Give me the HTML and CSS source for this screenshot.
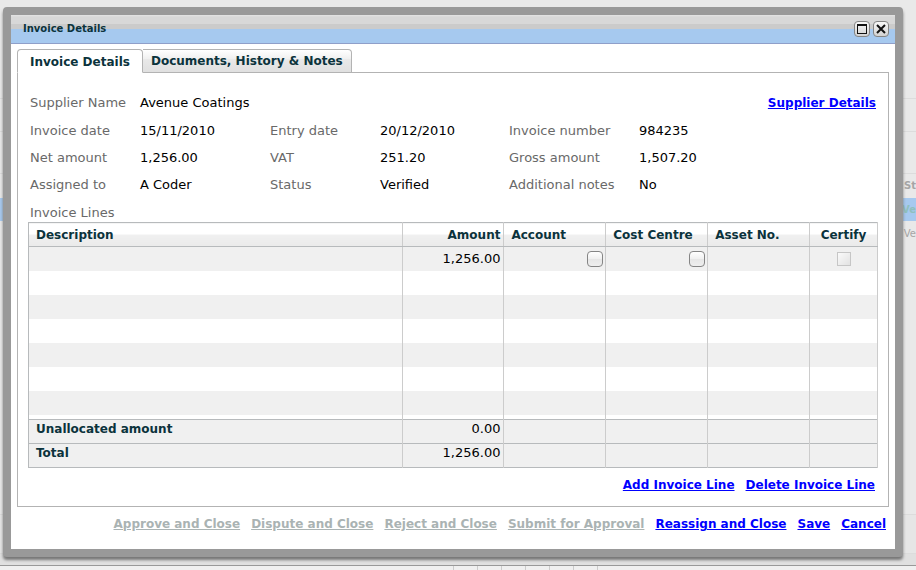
FILE: index.html
```html
<!DOCTYPE html>
<html lang="en">
<head>
<meta charset="utf-8">
<title>Invoice Details</title>
<link rel="stylesheet" href="styles.css">
</head>
<body>
<div class="backdrop" aria-hidden="true">
  <div class="band band-top"></div>
  <div class="band band-tools"></div>
  <div class="band band-filter"></div>
  <div class="band band-head">St</div>
  <div class="band band-selected">Ve</div>
  <div class="band band-row">Ve</div>
  <div class="band band-rest"></div>
  <div class="band band-foot"></div>
  <div class="band band-edge"></div>
  <div class="statusbar"><i></i><i></i><i></i><i></i><i></i><i></i><i></i></div>
</div>
<main class="dialog" role="dialog" aria-labelledby="dialog-title">
  <header class="titlebar">
    <h1 id="dialog-title">Invoice Details</h1>
    <button type="button" class="window-button" aria-label="Maximize"><svg viewBox="0 0 14 14"><path d="M2 2h10v10H2z M3 4v7h8V4z" fill="#111" fill-rule="evenodd"/></svg></button>
    <button type="button" class="window-button" aria-label="Close"><svg viewBox="0 0 14 14"><path d="M3 3l8 8M11 3l-8 8" stroke="#111" stroke-width="2"/></svg></button>
  </header>
  <div class="body">
    <div class="tabs" role="tablist">
      <button type="button" class="tab active" role="tab" aria-selected="true">Invoice Details</button>
      <button type="button" class="tab" role="tab" aria-selected="false">Documents, History &amp; Notes</button>
    </div>
    <section class="panel" role="tabpanel">
      <div class="supplier">
        <span class="label">Supplier Name</span><span>Avenue Coatings</span>
        <a class="link" href="#">Supplier Details</a>
      </div>
      <div class="fields">
        <span class="label">Invoice date</span><span>15/11/2010</span>
        <span class="label">Entry date</span><span>20/12/2010</span>
        <span class="label">Invoice number</span><span>984235</span>
        <span class="label">Net amount</span><span>1,256.00</span>
        <span class="label">VAT</span><span>251.20</span>
        <span class="label">Gross amount</span><span>1,507.20</span>
        <span class="label">Assigned to</span><span>A Coder</span>
        <span class="label">Status</span><span>Verified</span>
        <span class="label">Additional notes</span><span>No</span>
      </div>
      <h2 class="label lines-title" id="lines-title">Invoice Lines</h2>
      <table class="lines" aria-labelledby="lines-title">
        <colgroup><col class="c-desc"><col class="c-amount"><col class="c-account"><col class="c-centre"><col class="c-asset"><col class="c-certify"></colgroup>
        <thead>
          <tr><th>Description</th><th class="num">Amount</th><th>Account</th><th>Cost Centre</th><th>Asset No.</th><th class="mid">Certify</th></tr>
        </thead>
        <tbody>
          <tr><td></td><td class="num">1,256.00</td><td class="pick"><button type="button" class="picker" aria-label="Choose account"></button></td><td class="pick"><button type="button" class="picker" aria-label="Choose cost centre"></button></td><td></td><td class="mid"><input type="checkbox" class="certify" aria-label="Certify" disabled></td></tr>
          <tr><td></td><td></td><td></td><td></td><td></td><td></td></tr>
          <tr><td></td><td></td><td></td><td></td><td></td><td></td></tr>
          <tr><td></td><td></td><td></td><td></td><td></td><td></td></tr>
          <tr><td></td><td></td><td></td><td></td><td></td><td></td></tr>
          <tr><td></td><td></td><td></td><td></td><td></td><td></td></tr>
          <tr><td></td><td></td><td></td><td></td><td></td><td></td></tr>
          <tr class="spacer"><td></td><td></td><td></td><td></td><td></td><td></td></tr>
        </tbody>
        <tfoot>
          <tr><th>Unallocated amount</th><td class="num">0.00</td><td></td><td></td><td></td><td></td></tr>
          <tr><th>Total</th><td class="num">1,256.00</td><td></td><td></td><td></td><td></td></tr>
        </tfoot>
      </table>
      <div class="links">
        <a class="link" href="#">Add Invoice Line</a>
        <a class="link" href="#">Delete Invoice Line</a>
      </div>
    </section>
    <footer class="links">
      <a class="link disabled" aria-disabled="true">Approve and Close</a>
      <a class="link disabled" aria-disabled="true">Dispute and Close</a>
      <a class="link disabled" aria-disabled="true">Reject and Close</a>
      <a class="link disabled" aria-disabled="true">Submit for Approval</a>
      <a class="link" href="#">Reassign and Close</a>
      <a class="link" href="#">Save</a>
      <a class="link" href="#">Cancel</a>
    </footer>
  </div>
</main>
</body>
</html>
```

FILE: styles.css
```css
* { box-sizing: border-box; }

body {
  margin: 0;
  min-height: 100vh;
  display: grid;
  grid-template-columns: minmax(0, 1fr);
  background: #e9e9e9;
  color: #000;
  font: 13px/18px Verdana, "DejaVu Sans", sans-serif;
}

.backdrop, .dialog { grid-area: 1 / 1; }

.backdrop {
  display: flex;
  flex-direction: column;
  overflow: hidden;
  color: #a5a5a5;
  font-size: 10px;
  font-weight: bold;
}
.band {
  display: flex;
  justify-content: flex-end;
  align-items: center;
  border-bottom: 1px solid #dcdcdc;
}
.band-top { height: 99px; }
.band-tools { height: 33px; }
.band-filter { height: 42px; }
.band-head { height: 24px; border: 0; }
.band-selected { height: 23px; border: 0; background: #a6c9ef; color: #8fc0bd; }
.band-row { height: 25px; border: 0; font-weight: normal; }
.band-rest { flex: 1; }
.band-foot { height: 39px; background: #e6e6e6; }
.band-edge { height: 11px; border: 0; background: #e0e0e0; }
.statusbar {
  height: 5px;
  padding-left: 453px;
  border-top: 1px solid #999;
  background: #f0f0f0;
  display: flex;
  gap: 23px;
}
.statusbar i { width: 1px; background: #ccc; }

.dialog {
  position: relative;
  align-self: start;
  margin: 7px 13px 13px 3px;
  border: 8px solid #999;
  border-radius: 4px;
  background: #fff;
  box-shadow: 0 3px 3px #777;
}

.titlebar {
  height: 29px;
  padding: 0 6px 0 12px;
  display: flex;
  align-items: center;
  gap: 3px;
  border-bottom: 1px solid #8f9fc9;
  background: linear-gradient(#e4e4e4 0, #d8d8d8 2px, #d8d8d8 9px, #cbcbcb 9px, #cbcbcb 14px, #a6c9ef 14px);
}
.titlebar h1 { flex: 1; margin: 0; font-size: 10px; line-height: 18px; color: #0b333c; }
.window-button {
  width: 16px;
  height: 16px;
  padding: 0;
  border: 1px solid #858585;
  border-radius: 4px;
  background: linear-gradient(#f8f8f8, #d2d2d2);
}
.window-button svg { display: block; width: 14px; height: 14px; }

.body { padding: 5px 6px 16px; }

.tabs { display: flex; margin-bottom: -1px; }
.tab {
  position: relative;
  height: 24px;
  padding: 0 8px;
  border: 1px solid #b3b3b3;
  border-left: 0;
  border-radius: 0 4px 0 0;
  background: linear-gradient(#fff, #f0f0f0 40%, #e9e9e9 41%, #e0e0e0);
  color: #0b333c;
  font: bold 12px/22px Verdana, "DejaVu Sans", sans-serif;
}
.tab.active {
  padding: 1px 12px 0;
  border-left: 1px solid #b3b3b3;
  border-bottom-color: #fff;
  border-radius: 4px 4px 0 0;
  background: #fff;
}

.panel { padding: 21px 10px 12px; border: 1px solid #b3b3b3; }
.label { color: #696969; }
.supplier { display: flex; padding: 0 2px; }
.supplier .label { width: 110px; }
.supplier .link { margin-left: auto; }
.fields {
  display: grid;
  grid-template-columns: 110fr 130fr 110fr 129fr 130fr 239fr;
  row-gap: 9px;
  padding: 10px 0 0 2px;
}
.lines-title { margin: 10px 0 0 2px; font-size: 13px; font-weight: normal; }

.link {
  color: #00f;
  font-size: 12px;
  font-weight: bold;
  text-decoration: underline;
}
.link.disabled { color: #aab3b3; }
.links { display: flex; justify-content: flex-end; gap: 11px; padding: 8px 3px 0; }

.lines {
  width: 100%;
  table-layout: fixed;
  border-collapse: collapse;
  border: 1px solid #b7babc;
}
.c-desc { width: 44%; }
.c-amount, .c-account, .c-centre, .c-asset { width: 12%; }
.c-certify { width: 8%; }
.lines th, .lines td {
  height: 24px;
  padding: 0 3px 0 7px;
  border-right: 1px solid #ccc;
  text-align: left;
  line-height: 20px;
  vertical-align: middle;
}
.lines th { color: #0b333c; font-size: 12px; }
.lines thead th { border-bottom: 1px solid #b7babc; background: linear-gradient(#fff 50%, #f0f0f0 50%, #eaeaea); }
.lines tbody tr:nth-child(odd) { background: #f0f0f0; }
.lines tfoot tr { background: #f0f0f0; border-top: 1px solid #b7babc; }
.lines tfoot th, .lines tfoot td { line-height: 18px; vertical-align: top; }
.lines .spacer td { height: 5px; }
.lines .num { text-align: right; }
.lines .mid { padding: 0; text-align: center; }
.lines .pick { padding: 0 2px; text-align: right; }
.picker {
  display: block;
  width: 16px;
  height: 16px;
  margin-left: auto;
  padding: 0;
  border: 1px solid #858585;
  border-radius: 4px;
  background: linear-gradient(#fff, #f0f0f0 50%, #e6e6e6 50%, #eee);
}
.certify {
  appearance: none;
  display: block;
  width: 14px;
  height: 14px;
  margin: 0 auto;
  border: 1px solid #c6c6c6;
  background: linear-gradient(135deg, #fafafa, #e2e2e2);
}
```
